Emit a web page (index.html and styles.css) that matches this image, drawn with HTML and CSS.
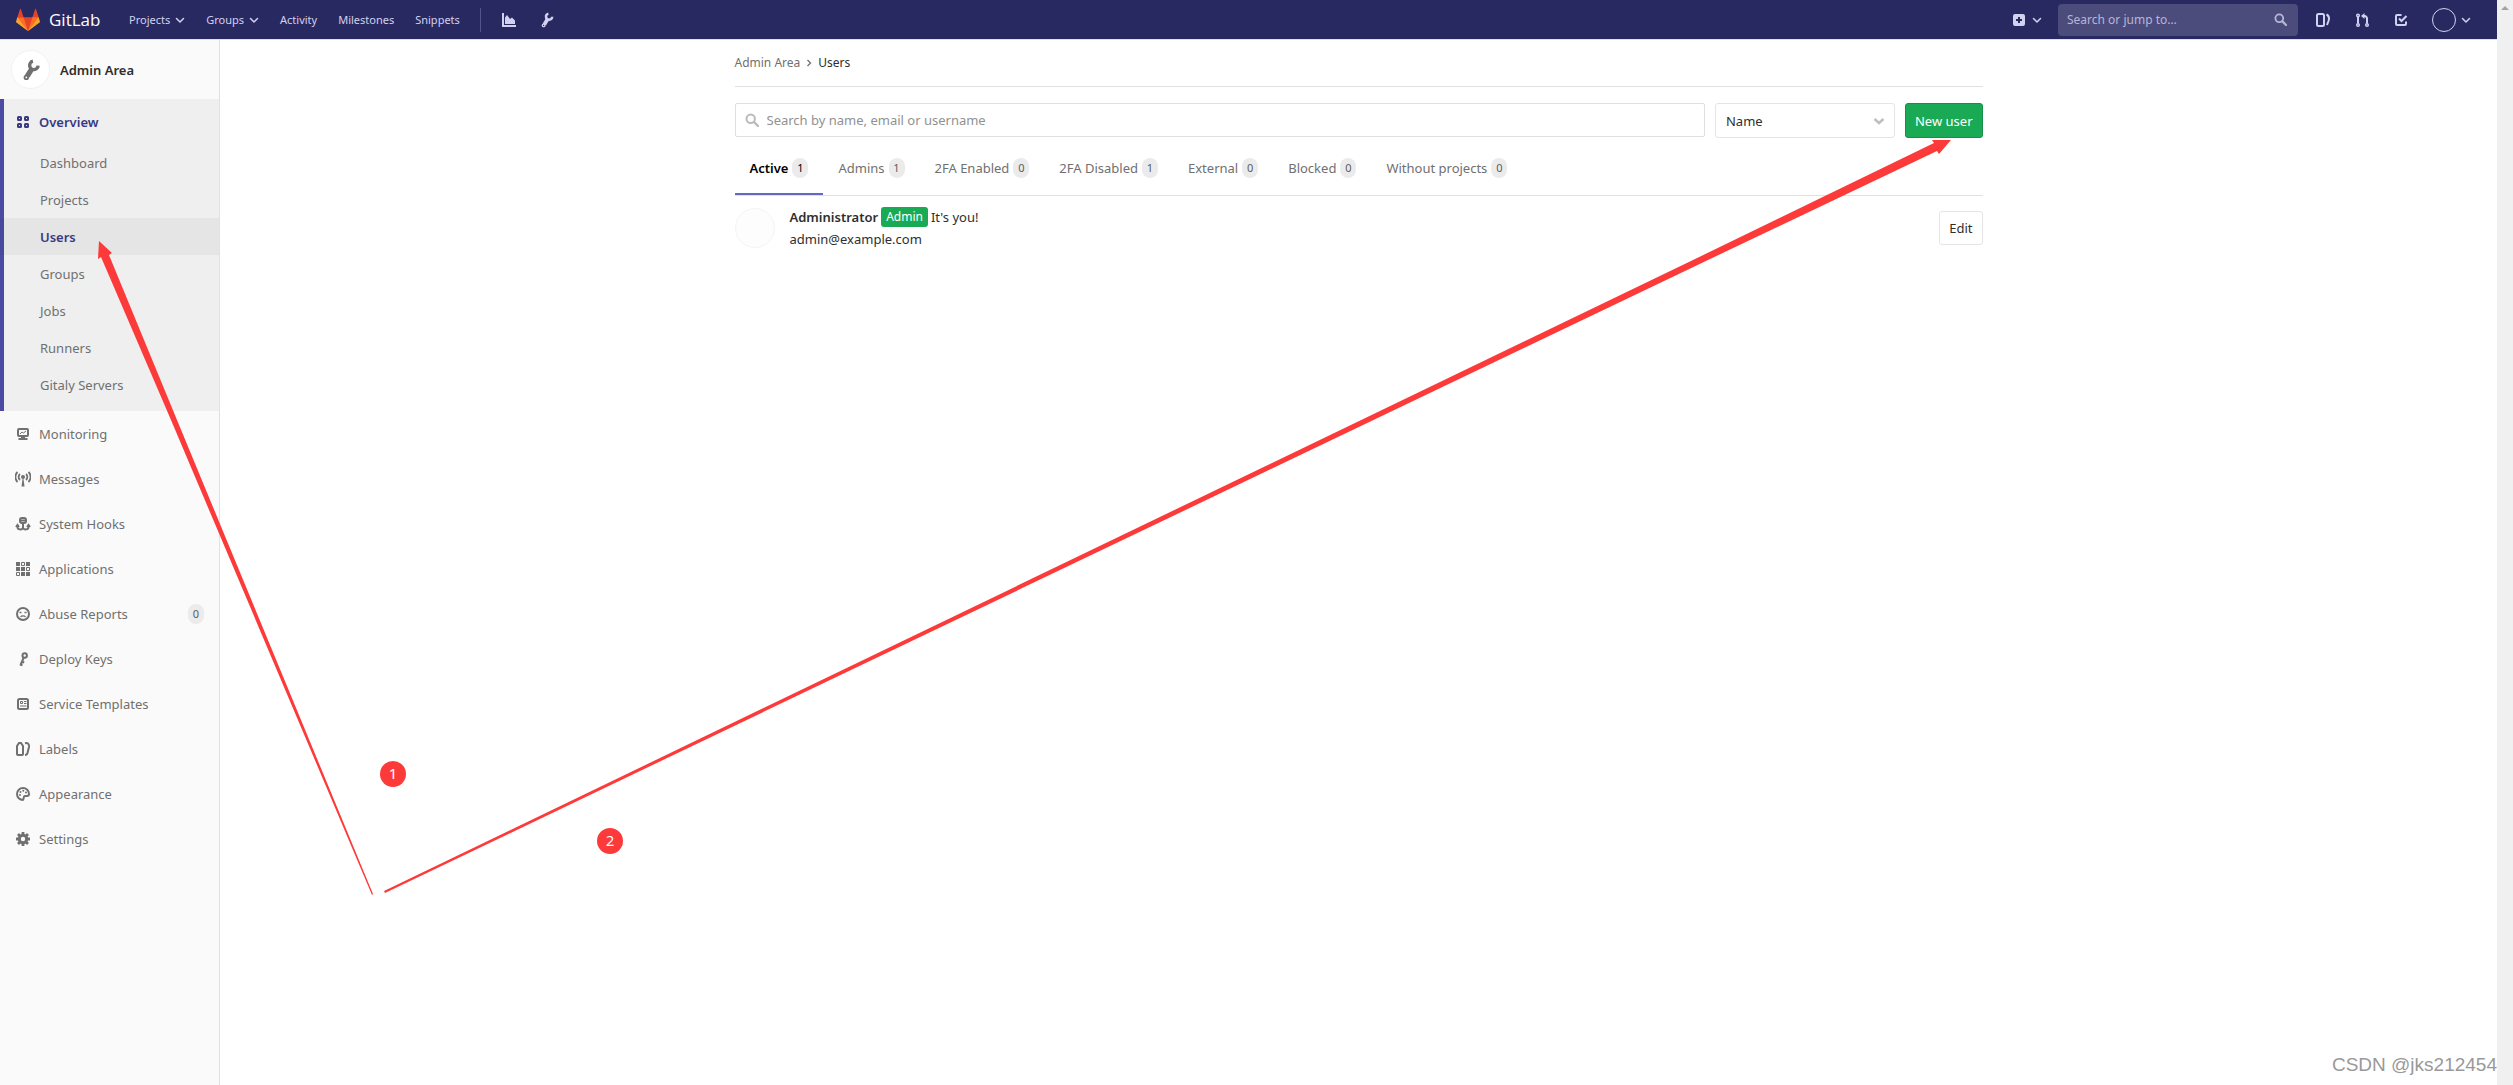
FILE: index.html
```html
<!DOCTYPE html>
<html lang="en">
<head>
<meta charset="utf-8">
<title>Users · Admin Area · GitLab</title>
<link rel="stylesheet" href="styles.css">
</head>
<body>
<svg class="sprite" aria-hidden="true">
  <symbol id="chevron" viewBox="0 0 10 10"><path d="M1.500 3.500 5 7l3.500-3.500" fill="none" stroke="currentColor" stroke-width="1.500" stroke-linecap="round" stroke-linejoin="round"/></symbol>
  <symbol id="search" viewBox="0 0 14 14"><circle cx="5.700" cy="5.700" r="4.200" fill="none" stroke="currentColor" stroke-width="2"/><path d="m9 9 4 4" stroke="currentColor" stroke-width="2.400" stroke-linecap="round"/></symbol>
  <symbol id="wrench" viewBox="0 0 16 16"><g fill="none" stroke="currentColor"><path stroke-width="2.400" d="M9.400 1.600A3.100 3.100 0 1 0 13.200 4.800"/><path stroke-width="3.800" d="M9 6.500 5.300 12.500"/><circle cx="4.600" cy="13.400" r="1.300" stroke-width="1.300"/></g></symbol>
</svg>
<div class="frame">
  <div class="app">
    <header class="navbar">
      <a class="brand" href="#">
        <svg width="24" height="24" viewBox="0 0 36 36" aria-hidden="true"><path fill="#e24329" d="m2 14 9.380 9v-9l-4-12.280c-.205-.632-1.176-.632-1.380 0zM34 14l-9.380 9v-9l4-12.280c.205-.632 1.176-.632 1.380 0zM18 34.380 3 14h30z"/><path fill="#fc6d26" d="M18 34.380 11.380 14H2l4 11zM18 34.380 24.620 14H34l-4 11z"/><path fill="#fca326" d="M2 14 .1 20.160c-.18.565 0 1.200.5 1.560L18 34.380zM34 14l1.900 6.160c.18.565 0 1.200-.5 1.560L18 34.380z"/></svg>
        <span>GitLab</span>
      </a>
      <nav class="nav-links" aria-label="Main">
        <button type="button">Projects <svg width="10" height="10"><use href="#chevron"/></svg></button>
        <button type="button">Groups <svg width="10" height="10"><use href="#chevron"/></svg></button>
        <a href="#">Activity</a>
        <a href="#">Milestones</a>
        <a href="#">Snippets</a>
      </nav>
      <div class="nav-tools">
        <a href="#" aria-label="Instance statistics"><svg width="16" height="16" viewBox="0 0 16 16"><path d="M1 1h2v12h12v2H1z" fill="currentColor"/><path d="M4 12V5.500L6 3l3 4 2-1.500 3 3V12z" fill="currentColor"/></svg></a>
        <a href="#" aria-label="Admin area"><svg width="16" height="16"><use href="#wrench"/></svg></a>
      </div>
      <div class="nav-right">
        <button type="button" class="new" aria-label="New"><svg width="14" height="14" viewBox="0 0 14 14"><path fill="currentColor" fill-rule="evenodd" d="M3 1h8a2 2 0 0 1 2 2v8a2 2 0 0 1-2 2H3a2 2 0 0 1-2-2V3a2 2 0 0 1 2-2zm3 3v2H4v2h2v2h2V8h2V6H8V4z"/></svg><svg width="10" height="10"><use href="#chevron"/></svg></button>
        <label class="jump"><input type="text" placeholder="Search or jump to…" aria-label="Search or jump to"><svg width="13" height="13"><use href="#search"/></svg></label>
        <a href="#" aria-label="Issues"><svg width="16" height="16" viewBox="0 0 16 16" fill="none" stroke="currentColor" stroke-width="2"><rect x="2" y="2" width="7" height="12" rx="1.500"/><path d="M11.500 2.500C14.500 4 14.500 6 13.500 9l-1.500 4"/></svg></a>
        <a href="#" aria-label="Merge requests"><svg width="16" height="16" viewBox="0 0 16 16" fill="none" stroke="currentColor" stroke-width="1.500"><circle cx="4" cy="3.500" r="1.300"/><circle cx="4" cy="13" r="1.300"/><circle cx="13" cy="13" r="1.300"/><path stroke-width="2" d="M4 5v6.500M13 11.500V6.500a2.500 2.500 0 0 0-2.500-2.500H9"/><path d="M10.500 1v6L7 4z" fill="currentColor" stroke="none"/></svg></a>
        <a href="#" aria-label="To-dos"><svg width="16" height="16" viewBox="0 0 16 16" fill="none" stroke="currentColor" stroke-width="2"><path d="M8.500 3H4a1 1 0 0 0-1 1v8a1 1 0 0 0 1 1h8a1 1 0 0 0 1-1V9.500"/><path d="m6 6.500 2.500 2.500L13.500 4"/></svg></a>
        <button type="button" class="profile" aria-label="Profile"><span class="face"></span><svg width="10" height="10"><use href="#chevron"/></svg></button>
      </div>
    </header>
    <div class="body">
      <aside class="sidebar">
        <a class="context" href="#"><span class="context-icon"><svg width="22" height="22"><use href="#wrench"/></svg></span>Admin Area</a>
        <section class="group">
          <a class="item current" href="#"><svg width="14" height="14" viewBox="0 0 14 14" fill="none" stroke="currentColor" stroke-width="2"><rect x="2" y="2" width="3" height="3" rx=".5"/><rect x="9" y="2" width="3" height="3" rx=".5"/><rect x="2" y="9" width="3" height="3" rx=".5"/><rect x="9" y="9" width="3" height="3" rx=".5"/></svg>Overview</a>
          <ul>
            <li><a href="#">Dashboard</a></li>
            <li><a href="#">Projects</a></li>
            <li><a class="active" href="#">Users</a></li>
            <li><a href="#">Groups</a></li>
            <li><a href="#">Jobs</a></li>
            <li><a href="#">Runners</a></li>
            <li><a href="#">Gitaly Servers</a></li>
          </ul>
        </section>
        <a class="item" href="#"><svg width="16" height="16" viewBox="0 0 16 16"><path fill="none" stroke="currentColor" stroke-width="2" d="M4 3h8a1 1 0 0 1 1 1v5a1 1 0 0 1-1 1H4a1 1 0 0 1-1-1V4a1 1 0 0 1 1-1z"/><path fill="none" stroke="currentColor" d="m5 8 2-2 1.500 1L11 5"/><path fill="currentColor" d="M6 10h4v2h2.500v2h-9v-2H6z"/></svg>Monitoring</a>
        <a class="item" href="#"><svg width="16" height="16" viewBox="0 0 16 16" fill="none" stroke="currentColor" stroke-width="1.800"><circle cx="8" cy="6" r="2" fill="currentColor" stroke="none"/><path d="M7.500 8h1l1 7.500h-3z" fill="currentColor" stroke="none"/><path d="M5 9a4 4 0 0 1 0-6M11 9a4 4 0 0 0 0-6M2.500 11a7 7 0 0 1 0-10M13.500 11a7 7 0 0 0 0-10"/></svg>Messages</a>
        <a class="item" href="#"><svg width="16" height="16" viewBox="0 0 16 16" fill="none" stroke="currentColor" stroke-width="2"><rect x="5" y="2" width="6" height="5" rx="2"/><path d="M5 4.500h6M8 7v6M2.500 9.500v1.500c0 2.500 4 3.500 5.500 1 1.500 2.500 5.500 1.500 5.500-1V9.500M1 11l1.500-2L4 11M12 11l1.500-2 1.500 2"/></svg>System Hooks</a>
        <a class="item" href="#"><svg width="16" height="16" viewBox="0 0 16 16" fill="currentColor"><path d="M1 1h4v4H1zM11 1h4v4h-4zM1 6h4v4H1zM6 6h4v4H6zM6 11h4v4H6zM11 11h4v4h-4z"/><path fill="none" stroke="currentColor" d="M6.500 1.500h3v3h-3zM11.500 6.500h3v3h-3zM1.500 11.500h3v3h-3z"/></svg>Applications</a>
        <a class="item" href="#"><svg width="16" height="16" viewBox="0 0 16 16"><circle cx="8" cy="8" r="6" fill="none" stroke="currentColor" stroke-width="2"/><path d="M4.500 6.500h2M9.500 6.500h2M5.500 11c1-1.500 4-1.500 5 0" fill="none" stroke="currentColor" stroke-width="1.300"/></svg>Abuse Reports<span class="badge">0</span></a>
        <a class="item" href="#"><svg width="16" height="16" viewBox="0 0 16 16" fill="none" stroke="currentColor" stroke-width="2"><circle cx="9.700" cy="4.500" r="2.200"/><path d="M8.800 6.500 5.500 14M6.500 10.500l2.700 1M5 13.500l2.500.8"/></svg>Deploy Keys</a>
        <a class="item" href="#"><svg width="16" height="16" viewBox="0 0 16 16" fill="none" stroke="currentColor"><rect x="3" y="3" width="10" height="10" rx="1.500" stroke-width="2"/><path d="M5.500 5.500h2v2h-2zM9 5.500h2.500M9 7.500h2.500M5 10h6.500" stroke-width="1"/></svg>Service Templates</a>
        <a class="item" href="#"><svg width="16" height="16" viewBox="0 0 16 16" fill="none" stroke="currentColor" stroke-width="2"><path d="M2 5l2-3h2l2 3v8a1 1 0 0 1-1 1H3a1 1 0 0 1-1-1zM10 2.300c3-.8 4.500 1 4 3.700l-1.500 6c-.4 1.500-1 2-2.500 2"/></svg>Labels</a>
        <a class="item" href="#"><svg width="16" height="16" viewBox="0 0 16 16"><path fill="none" stroke="currentColor" stroke-width="2" d="M8 14A6 6 0 1 1 14 8c0 1.500-1 2-2 2h-2c-2 0-1 4-2 4z"/><g fill="currentColor"><circle cx="5" cy="9" r="1"/><circle cx="5.500" cy="6" r="1"/><circle cx="8.300" cy="4.800" r="1"/><circle cx="11" cy="6.500" r="1"/></g></svg>Appearance</a>
        <a class="item" href="#"><svg width="16" height="16" viewBox="0 0 16 16" fill="none" stroke="currentColor"><circle cx="8" cy="8" r="3.700" stroke-width="3"/><path stroke-width="2.800" d="M8 1v3M8 12v3M1 8h3M12 8h3M3 3l2.200 2.200M10.800 10.800 13 13M3 13l2.200-2.200M10.800 5.200 13 3"/></svg>Settings</a>
      </aside>
      <main class="content">
        <nav class="crumbs" aria-label="Breadcrumb"><a href="#">Admin Area</a><svg width="8" height="8" viewBox="0 0 8 8"><path d="m2.500 1 3 3-3 3" fill="none" stroke="currentColor" stroke-width="1.300"/></svg><a class="here" href="#">Users</a></nav>
        <form class="filters">
          <label class="find"><svg width="14" height="14"><use href="#search"/></svg><input type="text" placeholder="Search by name, email or username" aria-label="Search users"></label>
          <label class="sort"><select aria-label="Sort by"><option>Name</option></select><svg width="12" height="12" viewBox="0 0 12 12"><path d="m1.500 4 4.500 4 4.500-4" fill="none" stroke="currentColor" stroke-width="2.500"/></svg></label>
          <button type="button" class="btn primary">New user</button>
        </form>
        <nav class="tabs" aria-label="User filters">
          <a class="active" href="#">Active<span class="badge">1</span></a>
          <a href="#">Admins<span class="badge">1</span></a>
          <a href="#">2FA Enabled<span class="badge">0</span></a>
          <a href="#">2FA Disabled<span class="badge">1</span></a>
          <a href="#">External<span class="badge">0</span></a>
          <a href="#">Blocked<span class="badge">0</span></a>
          <a href="#">Without projects<span class="badge">0</span></a>
        </nav>
        <div class="user">
          <span class="avatar"></span>
          <div class="details">
            <div class="name"><a href="#">Administrator</a><span class="role">Admin</span><span>It's you!</span></div>
            <a class="mail" href="#">admin@example.com</a>
          </div>
          <button type="button" class="btn">Edit</button>
        </div>
      </main>
    </div>
  </div>
  <div class="scroll-track" aria-hidden="true"><svg width="8" height="4" viewBox="0 0 8 4"><path d="m0 4 4-4 4 4z" fill="#a3a3a3"/></svg></div>
</div>
<svg class="arrows" width="2000" height="900" aria-hidden="true" fill="#fd3a3a"><path d="M99 241 112 253 109 255 177 420 373 894 372 895 171 420 101 257 98 259z"/><path d="M1951 140 1939 154 1937 151 1708 260 385 893 384 891 1693 260 1934 143 1932 140z"/></svg>
<span class="step one">1</span>
<span class="step two">2</span>
<div class="watermark">CSDN @jks212454</div>
</body>
</html>
```
FILE: styles.css
```css
* { box-sizing: border-box; }
body { margin: 0; position: relative; background: #fff; color: #2e2e2e; font: 13px/20px "Noto Sans", "Open Sans", sans-serif; }
a { color: inherit; text-decoration: none; }
button, input, select { font: inherit; color: inherit; }
button { padding: 0; border: 0; background: none; }
svg { display: block; flex: none; }
ul { margin: 0; padding: 0 0 8px; list-style: none; }
.sprite { position: absolute; width: 0; height: 0; }

.frame { display: flex; min-height: 100vh; }
.app { flex: 1; display: flex; flex-direction: column; min-width: 0; }
.scroll-track { width: 16px; padding: 6px 4px; background: #f0f0f0; }

.navbar { display: flex; align-items: center; height: 40px; padding: 0 26px 0 16px; background: #292961; border-bottom: 1px solid #dfdfe7; color: #d1d1f0; font-size: 11px; }
.brand { display: flex; align-items: center; gap: 9px; width: 113px; color: #fff; font: 500 17px/24px "Open Sans", sans-serif; }
.nav-links { display: flex; gap: 21px; padding-right: 20px; }
.nav-links button, .nav-right button { display: flex; align-items: center; gap: 5px; }
.nav-tools { display: flex; align-items: center; gap: 22px; height: 24px; padding-left: 20px; border-left: 1px solid #54548a; }
.nav-right { display: flex; align-items: center; gap: 23px; margin-left: auto; }
.nav-right .new { gap: 6px; margin-right: -7px; }
.jump { display: flex; align-items: center; width: 240px; height: 32px; margin-right: -6px; padding: 0 11px 0 9px; border-radius: 4px; background: #4c4c7c; color: #b5b5d6; font-size: 12px; }
.jump input { flex: 1; min-width: 0; padding: 0; border: 0; outline: 0; background: none; }
.jump input::placeholder { color: #b5b5d6; opacity: 1; }
.face { width: 24px; height: 24px; border: 1px solid #d1d1f0; border-radius: 50%; }

.body { flex: 1; display: flex; }
.sidebar { width: 220px; flex: none; background: #fafafa; border-right: 1px solid #e1e1e1; color: #707070; }
.context { display: flex; align-items: center; gap: 10px; height: 59px; padding: 0 11px; color: #2e2e2e; font-weight: 600; }
.context-icon { display: grid; place-items: center; width: 39px; height: 39px; border: 1px solid #f2f2f2; border-radius: 50%; background: #fff; color: #707070; }
.group { background: #efefef; box-shadow: inset 4px 0 #4b4ba3; }
.item { display: flex; align-items: center; gap: 8px; height: 45px; padding: 0 15px; }
.item.current { gap: 9px; padding-left: 16px; color: #393982; font-weight: 600; }
.item .badge { margin-left: auto; }
.group li a { display: block; padding: 9px 40px 8px; }
.group li .active { background: rgba(0, 0, 0, .04); color: #393982; font-weight: 600; }
.badge { min-width: 16px; padding: 0 4px; border-radius: 10px; background: #ebebeb; color: #5c5c5c; font-size: 11px; font-weight: 400; text-align: center; }

.content { flex: 1; max-width: 1280px; margin: 0 auto; padding: 0 16px; }
.crumbs { display: flex; align-items: center; gap: 5px; height: 47px; border-bottom: 1px solid #e1e1e1; color: #707070; font-size: 12px; }
.crumbs .here { color: #2e2e2e; }
.filters { display: flex; gap: 10px; padding-top: 16px; }
.find { flex: 1; display: flex; align-items: center; gap: 8px; height: 34px; padding: 0 9px; border: 1px solid #dfdfdf; border-radius: 2px; color: #bababa; }
.find input { flex: 1; padding: 0; border: 0; outline: 0; background: none; }
.find input::placeholder { color: #919191; opacity: 1; }
.sort { display: flex; align-items: center; width: 180px; height: 35px; padding-right: 9px; border: 1px solid #e5e5e5; border-radius: 3px; color: #bfbfbf; }
.sort select { flex: 1; height: 33px; padding: 0 10px; border: 0; outline: 0; background: none; color: #2e2e2e; appearance: none; }
.btn { height: 34px; padding: 0 9px; border: 1px solid #e5e5e5; border-radius: 3px; background: #fff; white-space: nowrap; }
.btn.primary { height: 35px; border-color: #168f48; background: #1aaa55; color: #fff; }
.tabs { display: flex; height: 58px; border-bottom: 1px solid #e1e1e1; color: #707070; }
.tabs a { display: flex; align-items: center; gap: 4px; padding: 2px 15px 0; }
.tabs .active { box-shadow: inset 0 -2px #6666c4; color: #000; font-weight: 600; }
.tabs .active .badge { color: #000; }
.user { display: flex; align-items: center; gap: 15px; padding-top: 11px; }
.avatar { width: 40px; height: 40px; border: 1px solid #f4f4f4; border-radius: 50%; background: #fdfdfd; }
.details { flex: 1; display: grid; gap: 2px; }
.name { display: flex; gap: 3px; }
.name a { font-weight: 600; }
.role { padding: 0 5px; border-radius: 3px; background: #1aaa55; color: #fff; font-size: 12px; }

.arrows { position: absolute; top: 0; left: 0; pointer-events: none; }
.step { position: absolute; width: 26px; height: 26px; border-radius: 50%; background: #fd3a3a; color: #fff; font-size: 15px; line-height: 25px; text-align: center; }
.one { top: 761px; left: 380px; }
.two { top: 828px; left: 597px; }
.watermark { position: absolute; right: 16px; bottom: 8px; color: #999; font: 19px/24px "Liberation Sans", Arial, sans-serif; text-shadow: 1px 1px #fff; }
```
